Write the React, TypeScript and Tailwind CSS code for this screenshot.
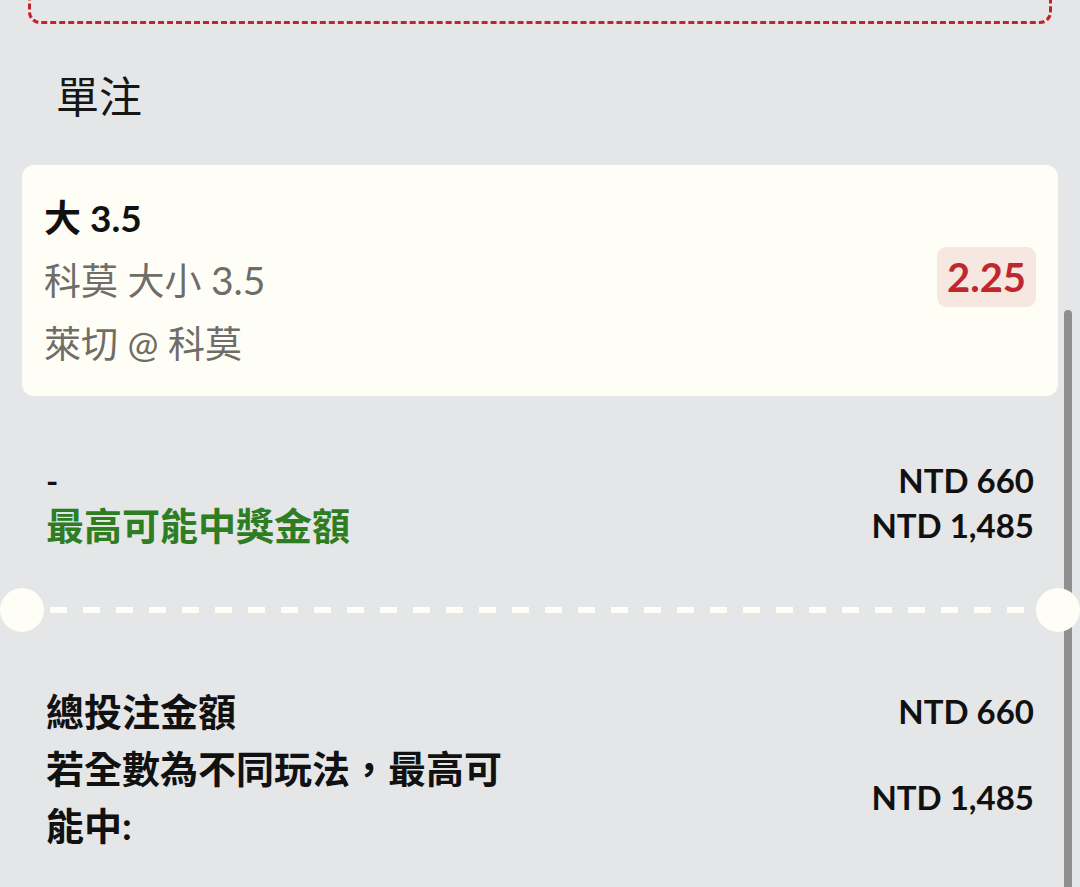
import React from 'react';

const font = { fontFamily: 'Lato, "Noto Sans CJK TC", sans-serif' };

const SummaryRow = ({ left, right }: { left: React.ReactNode; right: string }) => (
  <div className="flex items-center justify-between">
    <div className="max-w-[480px] text-[38px] font-bold leading-[57px] text-[#111]">{left}</div>
    <div className="text-[33px] font-bold leading-[57px] text-[#111]">{right}</div>
  </div>
);

export default function App() {
  return (
    <div className="relative min-h-[887px] w-full overflow-hidden bg-[#e5e6e8]" style={font}>
      {/* scrollbar */}
      <div className="absolute right-[8px] top-[310px] bottom-0 w-[8px] rounded-t-full bg-[#8f8f8f]" />

      {/* previous box, mostly scrolled out */}
      <div className="mx-[28px] -mt-[40px] h-[64px] rounded-[12px] border-[3px] border-dashed border-[#c4232c]" />

      <h2 className="ml-[56px] mt-[47px] h-[52px] text-[43px] font-normal leading-[52px] text-[#161616]">單注</h2>

      {/* bet card */}
      <div className="mx-[22px] mt-[42px] flex h-[231px] items-center justify-between rounded-[12px] bg-[#fefef6] pl-[22px] pr-[22px]">
        <div>
          <div className="text-[37px] font-bold leading-[63px] text-[#111]">大 3.5</div>
          <div className="text-[37px] leading-[63px] text-[#6e6d68]">
            科莫 大小 <span className="text-[39px]">3.5</span>
          </div>
          <div className="text-[37px] leading-[63px] text-[#6e6d68]">萊切 @ 科莫</div>
        </div>
        <div className="-mt-[8px] flex h-[60px] w-[99px] items-center justify-center rounded-[9px] bg-[#f6e7e0] text-[40px] font-bold text-[#c0272d]">
          2.25
        </div>
      </div>

      {/* odds summary */}
      <div className="mt-[62px] flex justify-between px-[46px]">
        <div className="leading-[45px]">
          <div className="text-[33px] font-bold text-[#111]">-</div>
          <div className="text-[38px] font-bold text-[#2f7d22]">最高可能中獎金額</div>
        </div>
        <div className="text-right text-[33px] font-bold leading-[45px] text-[#111]">
          <div>NTD 660</div>
          <div>NTD 1,485</div>
        </div>
      </div>

      {/* ticket divider */}
      <div className="relative z-10 mt-[40px] flex items-center">
        <div className="h-[44px] w-[44px] shrink-0 rounded-full bg-[#fefef6]" />
        <div className="mx-[6px] h-[6px] flex-1 bg-[repeating-linear-gradient(to_right,#fefef6_0_17px,transparent_17px_33px)]" />
        <div className="h-[44px] w-[44px] shrink-0 rounded-full bg-[#fefef6]" />
      </div>

      {/* totals */}
      <div className="mt-[51px] px-[46px]">
        <SummaryRow left="總投注金額" right="NTD 660" />
        <SummaryRow left="若全數為不同玩法，最高可能中:" right="NTD 1,485" />
      </div>
    </div>
  );
}
